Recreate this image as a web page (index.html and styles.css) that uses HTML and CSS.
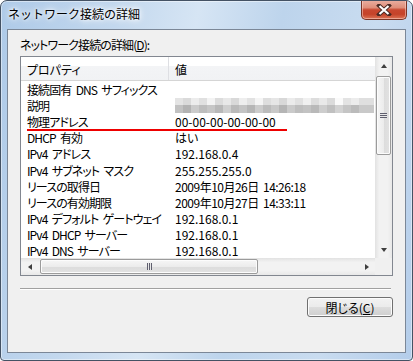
FILE: index.html
```html
<!DOCTYPE html>
<html lang="ja">
<head>
  <meta charset="UTF-8">
  <title>ネットワーク接続の詳細</title>
  <link rel="stylesheet" href="styles.css">
</head>
<body>
  <div class="window">
    <div class="titlebar">
      <span class="title">ネットワーク接続の詳細</span>
      <button class="close-btn">
        <svg width="16" height="12" viewBox="0 0 16 12">
          <path d="M3 1.5 L13 10.5 M13 1.5 L3 10.5" stroke="#4a2a24" stroke-width="4" stroke-linecap="square"/>
          <path d="M3.5 2 L12.5 10 M12.5 2 L3.5 10" stroke="#fff" stroke-width="2.2"/>
        </svg>
      </button>
    </div>

    <div class="client">
      <div class="caption">ネットワーク接続の詳細(<u>D</u>):</div>

      <div class="listview">
        <div class="list-main">
          <div class="list-area">
            <div class="list-header">
              <div class="col-prop">プロパティ</div>
              <div class="col-val">値</div>
            </div>
            <div class="list-body">
              <div class="row"><div class="prop">接続固有 DNS サフィックス</div><div class="val"></div></div>
              <div class="row"><div class="prop">説明</div><div class="val"><div class="blur"></div></div></div>
              <div class="row"><div class="prop">物理アドレス</div><div class="val">00-00-00-00-00-00</div></div>
              <div class="row"><div class="prop">DHCP 有効</div><div class="val">はい</div></div>
              <div class="row"><div class="prop">IPv4 アドレス</div><div class="val">192.168.0.4</div></div>
              <div class="row"><div class="prop">IPv4 サブネット マスク</div><div class="val">255.255.255.0</div></div>
              <div class="row"><div class="prop">リースの取得日</div><div class="val date">2009年10月26日 14:26:18</div></div>
              <div class="row"><div class="prop">リースの有効期限</div><div class="val date">2009年10月27日 14:33:11</div></div>
              <div class="row"><div class="prop">IPv4 デフォルト ゲートウェイ</div><div class="val">192.168.0.1</div></div>
              <div class="row"><div class="prop">IPv4 DHCP サーバー</div><div class="val">192.168.0.1</div></div>
              <div class="row"><div class="prop">IPv4 DNS サーバー</div><div class="val">192.168.0.1</div></div>
              <div class="mark"></div>
            </div>
          </div>

          <div class="vscroll">
            <div class="arrow-btn"><span class="tri tri-up"></span></div>
            <div class="vthumb"><span class="grip-h"></span></div>
            <div class="vtrack"></div>
            <div class="arrow-btn"><span class="tri tri-down"></span></div>
          </div>
        </div>

        <div class="hscroll-row">
          <div class="hscroll">
            <div class="arrow-btn"><span class="tri tri-left"></span></div>
            <div class="hthumb"><span class="grip-v"></span></div>
            <div class="htrack"></div>
            <div class="arrow-btn"><span class="tri tri-right"></span></div>
          </div>
          <div class="corner"></div>
        </div>
      </div>

      <div class="separator"></div>

      <div class="footer">
        <button class="btn">閉じる(<u>C</u>)</button>
      </div>
    </div>
  </div>
</body>
</html>
```

FILE: styles.css
```css
body {
  margin: 0;
  font-family: "Noto Sans CJK JP", sans-serif;
  font-size: 12px;
  color: #000;
}
.window {
  width: 413px;
  height: 361px;
  box-sizing: border-box;
  border: 1px solid #445264;
  border-radius: 7px 7px 4px 4px;
  background: linear-gradient(100deg, #aecae8 0%, #c3d8ee 25%, #d6e5f4 42%, #bdd4ec 60%, #c9dcf0 80%, #b4cdea 100%);
  box-shadow: inset 0 0 0 1px rgba(255, 255, 255, 0.45);
  overflow: hidden;
}
.titlebar {
  height: 28px;
  display: flex;
  align-items: flex-start;
}
.title {
  padding-left: 7px;
  line-height: 28px;
  margin-top: -1px;
  text-shadow: 0 0 6px #fff, 0 0 10px #fff, 0 0 3px #fff;
}
.close-btn {
  margin-left: auto;
  margin-right: 5px;
  margin-top: -1px;
  width: 46px;
  height: 20px;
  padding: 0;
  border: 1px solid #7a3426;
  border-top: none;
  border-radius: 0 0 5px 5px;
  background: linear-gradient(#eab0a2 0%, #df8e7a 40%, #c8472f 52%, #c54329 75%, #dc7456 100%);
  box-shadow: inset 0 0 0 1px rgba(255, 220, 210, 0.5);
  display: flex;
  align-items: center;
  justify-content: center;
}
.close-btn svg {
  display: block;
}
.client {
  margin: 0 6px;
  height: 324px;
  box-sizing: border-box;
  border: 1px solid #7b8797;
  background: #f0f0f0;
}
.caption {
  margin: 7px 0 3px 12px;
  line-height: 16px;
  letter-spacing: -0.9px;
  font-feature-settings: "palt";
}
.listview {
  margin: 0 12px;
  height: 220px;
  box-sizing: border-box;
  border: 1px solid #828790;
  background: #fff;
  display: flex;
  flex-direction: column;
}
.list-main {
  display: flex;
  height: 201px;
}
.list-area {
  width: 354px;
  overflow: hidden;
}
.list-header {
  display: flex;
  height: 24px;
  box-sizing: border-box;
  border-bottom: 1px solid #d5d5d5;
  background: linear-gradient(#ffffff 0%, #ffffff 40%, #f3f4f6 41%, #f1f2f4 100%);
  line-height: 23px;
  font-feature-settings: "palt";
}
.col-prop {
  width: 148px;
  box-sizing: border-box;
  padding-left: 6px;
  padding-top: 1px;
  border-right: 1px solid #dedfe3;
}
.col-val {
  padding-left: 6px;
  padding-top: 1px;
}
.list-body {
  position: relative;
  font-feature-settings: "palt";
}
.row {
  display: flex;
  height: 16.2px;
  line-height: 15px;
  padding-top: 0.6px;
  box-sizing: border-box;
  white-space: pre;
}
.prop {
  width: 148px;
  flex-shrink: 0;
  box-sizing: border-box;
  padding-left: 6px;
  letter-spacing: -0.9px;
  word-spacing: 2.5px;
}
.val {
  padding-left: 6px;
}
.date {
  letter-spacing: -0.5px;
  word-spacing: 2px;
}
.blur {
  width: 199px;
  height: 15px;
  background:
    linear-gradient(90deg, #e4e4e4 0 8px, #dadada 8px 16px, #ececec 16px 24px, #e0e0e0 24px 32px, #f3f3f3 32px 40px, #dcdcdc 40px 48px, #e8e8e8 48px 56px, #d9d9d9 56px 64px, #eeeeee 64px 72px, #e2e2e2 72px 80px, #f5f5f5 80px 88px, #dedede 88px 96px, #e6e6e6 96px 104px, #d8d8d8 104px 112px, #ebebeb 112px 120px, #e1e1e1 120px 128px, #f0f0f0 128px 136px, #dddddd 136px 144px, #e9e9e9 144px 152px, #dbdbdb 152px 160px, #fafafa 160px 168px, #e3e3e3 168px 176px, #ececec 176px 184px, #dfdfdf 184px 199px) top / 100% 7px no-repeat,
    linear-gradient(90deg, #c2c2c2 0 8px, #b3b3b3 8px 16px, #cbcbcb 16px 24px, #bdbdbd 24px 32px, #c6c6c6 32px 40px, #b8b8b8 40px 48px, #cfcfcf 48px 56px, #bababa 56px 64px, #c4c4c4 64px 72px, #b6b6b6 72px 80px, #cccccc 80px 88px, #bcbcbc 88px 96px, #c8c8c8 96px 104px, #b5b5b5 104px 112px, #cacaca 112px 120px, #bebebe 120px 128px, #c3c3c3 128px 136px, #b9b9b9 136px 144px, #cdcdcd 144px 152px, #c0c0c0 152px 160px, #d2d2d2 160px 168px, #c5c5c5 168px 176px, #bbbbbb 176px 184px, #c9c9c9 184px 199px) bottom / 100% 8px no-repeat;
}
.mark {
  position: absolute;
  left: 6px;
  top: 48px;
  width: 260px;
  height: 2px;
  background: #ee0000;
}
.vscroll {
  width: 17px;
  display: flex;
  flex-direction: column;
  background: linear-gradient(90deg, #e2e2e2 0%, #f2f2f2 25%, #f2f2f2 75%, #e8e8e8 100%);
}
.arrow-btn {
  width: 17px;
  height: 17px;
  flex-shrink: 0;
  display: flex;
  align-items: center;
  justify-content: center;
}
.vthumb {
  margin: 2px 1px 0;
  height: 79px;
  box-sizing: border-box;
  border: 1px solid #9b9b9b;
  border-radius: 2px;
  background: linear-gradient(90deg, #f6f6f6 0%, #ececec 50%, #dcdcdc 51%, #e2e2e2 100%);
  box-shadow: inset 0 0 0 1px #fcfcfc;
  display: flex;
  align-items: center;
  justify-content: center;
}
.vtrack, .htrack {
  flex: 1;
}
.grip-h {
  width: 7px;
  height: 5px;
  background: repeating-linear-gradient(#5f5f6e 0 1px, #e8e8e8 1px 2px);
}
.grip-v {
  width: 5px;
  height: 7px;
  background: repeating-linear-gradient(90deg, #5f5f6e 0 1px, #e8e8e8 1px 2px);
}
.tri {
  width: 0;
  height: 0;
  border: 4px solid transparent;
}
.tri-up {
  border-bottom: 4px solid #3f3f3f;
  border-top: none;
  border-left-width: 3.5px;
  border-right-width: 3.5px;
}
.tri-down {
  border-top: 4px solid #3f3f3f;
  border-bottom: none;
  border-left-width: 3.5px;
  border-right-width: 3.5px;
}
.tri-left {
  border-right: 4px solid #3f3f3f;
  border-left: none;
  border-top-width: 3.5px;
  border-bottom-width: 3.5px;
}
.tri-right {
  border-left: 4px solid #3f3f3f;
  border-right: none;
  border-top-width: 3.5px;
  border-bottom-width: 3.5px;
}
.hscroll-row {
  display: flex;
  height: 17px;
}
.hscroll {
  width: 354px;
  display: flex;
  background: linear-gradient(#e2e2e2 0%, #f2f2f2 25%, #f2f2f2 75%, #e8e8e8 100%);
}
.hthumb {
  margin: 1px 0 1px 2px;
  width: 218px;
  box-sizing: border-box;
  border: 1px solid #9b9b9b;
  border-radius: 2px;
  background: linear-gradient(#f6f6f6 0%, #ececec 50%, #dcdcdc 51%, #e2e2e2 100%);
  box-shadow: inset 0 0 0 1px #fcfcfc;
  display: flex;
  align-items: center;
  justify-content: center;
}
.corner {
  width: 17px;
  background: #f0f0f0;
}
.separator {
  margin: 12px 14px 0 12px;
  border-top: 1px solid #a0a0a0;
  border-bottom: 1px solid #ffffff;
}
.footer {
  display: flex;
  justify-content: flex-end;
  padding: 7px 12px 0 0;
}
.btn {
  width: 86px;
  height: 20px;
  padding: 0;
  border: 1px solid #707070;
  border-radius: 3px;
  background: linear-gradient(#f2f2f2 0%, #ebebeb 50%, #dddddd 51%, #cfcfcf 100%);
  box-shadow: inset 0 0 0 1px #fcfcfc;
  font-family: "Noto Sans CJK JP", sans-serif;
  font-size: 12px;
  line-height: 17px;
  color: #000;
  font-feature-settings: "palt";
}
```
